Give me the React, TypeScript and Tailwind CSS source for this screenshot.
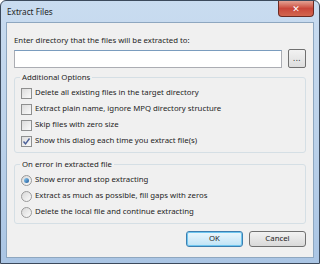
import React from 'react';

const font = { fontFamily: '"Noto Sans", "DejaVu Sans", sans-serif' };

const CheckBox = ({ checked }: { checked?: boolean }) => (
  <span className="w-[11px] h-[11px] border border-[#8e8f8f] bg-gradient-to-br from-[#dcdcdc] to-[#fafafa] flex items-center justify-center shrink-0">
    {checked && (
      <svg width="9" height="9" viewBox="0 0 9 9">
        <path d="M1.5 4.5 L3.5 6.8 L7.5 1.5" fill="none" stroke="#4a5f97" strokeWidth="1.4" />
      </svg>
    )}
  </span>
);

const Radio = ({ checked }: { checked?: boolean }) => (
  <span className="w-[11px] h-[11px] rounded-full border border-[#9a9a9a] bg-gradient-to-br from-[#d8d8d8] to-[#fbfbfb] flex items-center justify-center shrink-0">
    {checked && <span className="w-[5px] h-[5px] rounded-full bg-gradient-to-br from-[#8fd0f5] to-[#1e5a99]" />}
  </span>
);

const Group = ({ title, children }: { title: string; children: React.ReactNode }) => (
  <div className="relative border border-[#d5dfe5] rounded-[3px] pt-[9px] pb-[5px] px-[6px]">
    <span className="absolute -top-[7px] left-[5px] px-[2px] bg-[#f0f0f0] text-[7.8px] leading-[12px] text-[#1e1e1e]">{title}</span>
    <div className="flex flex-col gap-[4px]">{children}</div>
  </div>
);

const Row = ({ children, label }: { children: React.ReactNode; label: string }) => (
  <div className="flex items-center gap-[3px] h-[12px] text-[7.8px] text-[#1e1e1e]">
    {children}
    <span>{label}</span>
  </div>
);

export default function App() {
  return (
    <div className="w-[320px] h-[264px] bg-white" style={font}>
      <div className="w-full h-full flex flex-col border border-[#3c4a5c] rounded-t-[6px] bg-gradient-to-b from-[#c9dcf0] via-[#bcd2ea] to-[#aac5e4]">
        <div className="h-[21px] flex items-start pl-[6px] pr-[5px]">
          <span className="mt-[5px] text-[8.2px] text-[#1e1e1e]">Extract Files</span>
          <div className="ml-auto w-[36px] h-[16px] rounded-b-[4px] border border-[#6b2a22] border-t-0 bg-gradient-to-b from-[#e3a193] via-[#c9473a] to-[#d2664f] flex items-center justify-center">
            <span className="text-white text-[9px] font-bold leading-none">✕</span>
          </div>
        </div>
        <div className="flex-1 mx-[5px] mb-[5px] border border-[#8ea7c0] bg-[#f0f0f0] px-[7px] pt-[11px] flex flex-col">
          <div className="text-[7.8px] leading-[12px] text-[#1e1e1e]">Enter directory that the files will be extracted to:</div>
          <div className="flex items-center gap-[6px] mt-[3px]">
            <div className="flex-1 h-[18px] bg-white border border-[#abadb3] border-t-[#7a9cbe]" />
            <div className="w-[18px] h-[19px] rounded-[2px] border border-[#707070] bg-gradient-to-b from-[#f2f2f2] to-[#dddddd] flex items-end justify-center pb-[5px] text-[8px] leading-none tracking-[0.5px]">
              <span className="text-[#2a2a2a]">...</span>
            </div>
          </div>
          <div className="mt-[9px]">
            <Group title="Additional Options">
              <Row label="Delete all existing files in the target directory"><CheckBox /></Row>
              <Row label="Extract plain name, ignore MPQ directory structure"><CheckBox /></Row>
              <Row label="Skip files with zero size"><CheckBox /></Row>
              <Row label="Show this dialog each time you extract file(s)"><CheckBox checked /></Row>
            </Group>
          </div>
          <div className="mt-[11px]">
            <Group title="On error in extracted file">
              <Row label="Show error and stop extracting"><Radio checked /></Row>
              <Row label="Extract as much as possible, fill gaps with zeros"><Radio /></Row>
              <Row label="Delete the local file and continue extracting"><Radio /></Row>
            </Group>
          </div>
          <div className="flex justify-end gap-[6px] mt-[7px]">
            <div className="w-[57px] h-[16px] rounded-[3px] border border-[#3c7fb1] bg-gradient-to-b from-[#ebf7fd] to-[#bfe3f6] shadow-[inset_0_0_0_1px_#6fc6ef] flex items-center justify-center text-[7.8px] text-[#1e1e1e]">OK</div>
            <div className="w-[57px] h-[16px] rounded-[3px] border border-[#707070] bg-gradient-to-b from-[#f2f2f2] to-[#d9d9d9] flex items-center justify-center text-[7.8px] text-[#1e1e1e]">Cancel</div>
          </div>
        </div>
      </div>
    </div>
  );
}
